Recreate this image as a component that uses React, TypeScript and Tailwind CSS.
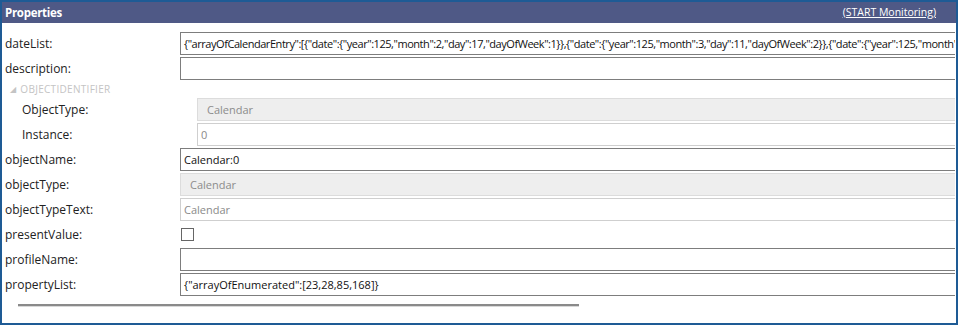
import React from "react";

const font = { fontFamily: '"Segoe UI", "Open Sans", "Noto Sans", sans-serif' };

function Row({ label, indent, children }: { label: string; indent?: boolean; children: React.ReactNode }) {
  return (
    <div className="flex h-[25px] items-center">
      <div className={`w-[178px] shrink-0 text-[12px] text-[#222] ${indent ? "pl-[20px]" : "pl-[3px]"}`}>{label}</div>
      <div className="flex-1 min-w-0 overflow-hidden flex items-center">{children}</div>
    </div>
  );
}

function Box({ value, kind, offset, tight }: { value?: string; kind: "dark" | "light" | "disabled"; offset?: boolean; tight?: boolean }) {
  const cls =
    kind === "dark"
      ? "border-[#7d7d7d] bg-white text-[#111] pl-[3px]"
      : kind === "light"
      ? "border-[#cfcfcf] bg-white text-[#8a8a8a] pl-[3px]"
      : "border-[#dcdcdc] bg-[#eeeeee] text-[#8c8c8c] pl-[9px]";
  return (
    <div
      className={`${offset ? "ml-[17px]" : ""} ${tight ? "tracking-[-0.45px]" : ""} shrink-0 w-[1200px] h-[23px] border ${cls} text-[11px] leading-[21px] whitespace-nowrap overflow-hidden`}
    >
      {value}
    </div>
  );
}

export default function App() {
  return (
    <div style={font} className="w-[958px] h-[325px] border-2 border-[#1e5b95] bg-white flex flex-col overflow-hidden">
      <div className="h-[21px] bg-[#4f5986] flex items-center justify-between px-[3px] shrink-0">
        <span className="text-white font-bold text-[11.5px] tracking-[-0.3px]">Properties</span>
        <span className="text-white text-[10.5px] underline mr-[17px]">(START Monitoring)</span>
      </div>
      <div className="flex flex-col pt-[8px] pr-[1px]">
        <Row label="dateList:">
          <Box
            kind="dark"
            tight
            value={'{"arrayOfCalendarEntry":[{"date":{"year":125,"month":2,"day":17,"dayOfWeek":1}},{"date":{"year":125,"month":3,"day":11,"dayOfWeek":2}},{"date":{"year":125,"month":4,"day":8,"dayOfWeek":3}}]}'}
          />
        </Row>
        <Row label="description:">
          <Box kind="dark" />
        </Row>
        <div className="h-[16px] flex items-center pl-[8px] text-[10px] text-[#c4c4c4] tracking-[0.3px]">
          <span className="text-[8px] mr-[4px]">◢</span>
          <span>OBJECTIDENTIFIER</span>
        </div>
        <Row label="ObjectType:" indent>
          <Box kind="disabled" value="Calendar" offset />
        </Row>
        <Row label="Instance:" indent>
          <Box kind="light" value="0" offset />
        </Row>
        <Row label="objectName:">
          <Box kind="dark" value="Calendar:0" />
        </Row>
        <Row label="objectType:">
          <Box kind="disabled" value="Calendar" />
        </Row>
        <Row label="objectTypeText:">
          <Box kind="light" value="Calendar" />
        </Row>
        <Row label="presentValue:">
          <div className="ml-[1px] w-[13px] h-[13px] border border-[#666] bg-white" />
        </Row>
        <Row label="profileName:">
          <Box kind="dark" />
        </Row>
        <Row label="propertyList:">
          <Box kind="dark" value={'{"arrayOfEnumerated":[23,28,85,168]}'} />
        </Row>
        <div className="pl-[16px] pt-[7px]">
          <div className="w-[561px] h-[2px] bg-[#8a8a8a] shadow-[0_1px_0_#d8d8d8]" />
        </div>
      </div>
    </div>
  );
}
